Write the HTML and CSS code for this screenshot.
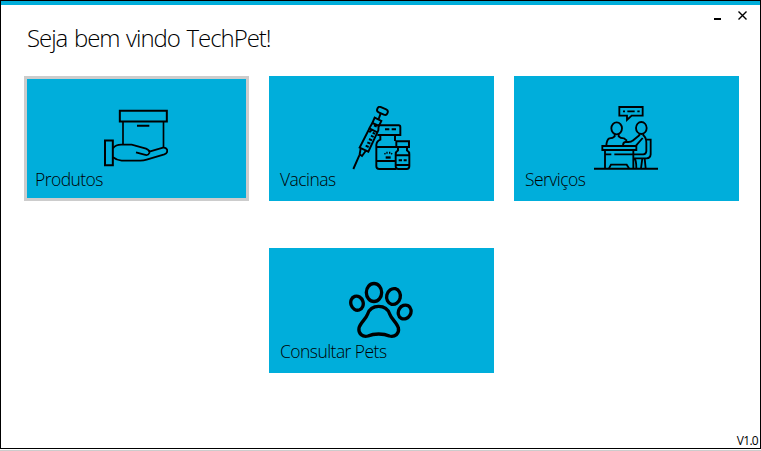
FILE: index.html
```html
<!DOCTYPE html>
<html lang="pt-BR">
<head>
<meta charset="utf-8">
<title>TechPet</title>
<link rel="stylesheet" href="styles.css">
</head>
<body>
<div class="window">
  <header class="header">
    <h1 class="title">Seja bem vindo TechPet!</h1>
    <div class="controls">
      <svg class="minimize" viewBox="0 0 7 2"><path d="M0 0h7v2H0z"/></svg>
      <svg class="close" viewBox="0 0 9 9"><path d="M.5.5l8 8M8.500.5l-8 8"/></svg>
    </div>
  </header>
  <main class="tiles">
    <a class="tile selected">
      <svg class="icon" viewBox="42 33 192 192">
        <path d="M89.500 47.500H230.500V79.500H89.500z" stroke-width="6"/>
        <path d="M99 80V148M220.500 80V158" stroke-width="5"/>
        <path d="M141 92H178M45 136.500H68.500V210.500H45z" stroke-width="6"/>
        <path d="M69 160Q77 149 94 149H125L168 161Q180 166 178 174Q174 183 163 179L138 172M178 170L219 158Q230 157 232 167Q232 175 223 178L170 194Q161 197 151 197H95Q80 196 69 187" stroke-width="5.500"/>
      </svg>
      <span class="label">Produtos</span>
    </a>
    <a class="tile">
      <svg class="icon" viewBox="27 33 192 192">
        <g stroke-width="5.800">
          <rect x="111" y="39" width="33" height="17" rx="8" transform="rotate(24 127 47)"/>
          <path d="M122 55L116 72M104 68L124 78L117 93L97 84zM97 84L88 100L112 112M116 92L115 106L85 170L59 158L89 99M102 91L110 95M97 103L88 112M98 113L105 117M93 122L101 126M87 132L96 136M82 142L91 146M77 152L86 156M62 160L59 178L66 183L77 168M58 181L40 222"/>
          <path d="M114 91H176Q181 91 181 96V120H112M135 103H148M155 103H168M121 122V134Q110 138 109 150V214Q109 222 118 222H168M165 122V138M109 156H167M109 198H167M169 139H207V156H169zM174 156V166Q167 170 167 178V214Q167 222 175 222H200Q208 222 208 214V178Q208 170 201 166V156M169 181H207M169 210H207M176 196H186M191 196H200"/>
        </g>
        <path d="M137 184H152V191H137z" fill="#000" stroke="none"/>
        <path d="M134 174L136 178M141 170V176M149 170V176M156 174L154 178" stroke-width="4"/>
      </svg>
      <span class="label">Vacinas</span>
    </a>
    <a class="tile">
      <svg class="icon" viewBox="42 33 192 192">
        <g stroke-width="5.500">
          <path d="M118 36H188V62H155L141 75V62H118zM129 49H135M142 49H164M172 49H179"/>
          <ellipse cx="110" cy="100" rx="16" ry="18"/>
          <ellipse cx="184" cy="99" rx="16" ry="18"/>
          <path d="M104 117V124Q99 130 88 130Q80 134 79 152M116 117V124Q121 130 132 130L141 137M178 117V121L158 137Q154 141 145 141H136Q129 142 129 152M190 117V121Q199 128 199 143V169Q198 177 190 178H162M188 129L168 152"/>
          <path d="M67 153H169V165H67zM75 166V220M160 166V220M75 178H94M103 178H159M87 220L93 209H140L147 220M199 134H212V178Q211 189 200 190H163M187 190L183 220M194 190L197 220M163 189Q169 195 169 220"/>
        </g>
        <path d="M42 221.500H234" stroke-width="6"/>
      </svg>
      <span class="label">Serviços</span>
    </a>
    <a class="tile second-row">
      <svg class="icon" viewBox="42 24 192 192">
        <g stroke-width="10">
          <ellipse cx="66" cy="99.500" rx="18.500" ry="21.500" transform="rotate(-18 66 99.500)"/>
          <ellipse cx="117" cy="67.500" rx="23" ry="27"/>
          <ellipse cx="175.500" cy="79.500" rx="20.500" ry="24" transform="rotate(14 175.500 79.500)"/>
          <ellipse cx="209" cy="126" rx="18.500" ry="21.500" transform="rotate(30 209 126)"/>
          <path d="M131 109C113 109 102 120 98 132C93 147 75 159 72 174C69 191 83 202 99 198C116 190 146 190 163 198C180 202 194 191 190 174C187 159 169 147 164 132C160 120 149 109 131 109z"/>
        </g>
      </svg>
      <span class="label">Consultar Pets</span>
    </a>
  </main>
  <footer class="version">V1.0</footer>
</div>
</body>
</html>
```
FILE: styles.css
```css
* {
  box-sizing: border-box;
}

body {
  margin: 0;
  height: 451px;
  background: #fff;
  border-bottom: 1px solid #ccc;
  font-family: "Open Sans", "Noto Sans", sans-serif;
  color: #000;
}

.window {
  height: 449px;
  border: 1px solid #000;
  display: flex;
  flex-direction: column;
}

.header {
  height: 75px;
  border-top: 4px solid #00aedb;
  display: flex;
  justify-content: space-between;
  padding: 0 13px 0 26px;
}

.title {
  margin: 16px 0 0;
  font-size: 24px;
  line-height: 33px;
  font-weight: 300;
  letter-spacing: -1.05px;
  word-spacing: 1.5px;
}

.controls {
  display: flex;
  gap: 17px;
  padding-top: 6px;
}

.minimize {
  width: 7px;
  height: 2px;
  margin-top: 7px;
}

.close {
  width: 9px;
  height: 9px;
  fill: none;
  stroke: #000;
  stroke-width: 1.4;
}

.tiles {
  display: grid;
  grid-template-columns: repeat(3, 225px);
  grid-auto-rows: 125px;
  gap: 47px 20px;
  padding-left: 23px;
}

.tile {
  display: grid;
  background: #00aedb;
}

.selected {
  box-shadow: inset 0 0 0 3px #ccc;
}

.second-row {
  grid-column: 2;
}

.icon,
.label {
  grid-area: 1 / 1;
}

.icon {
  width: 64px;
  height: 64px;
  margin: 30px 0 0 80px;
  fill: none;
  stroke: #000;
}

.label {
  align-self: end;
  padding: 0 0 10px 11px;
  font-size: 17.5px;
  line-height: 24px;
  font-weight: 300;
  letter-spacing: -0.55px;
}

.version {
  margin-top: auto;
  padding-right: 2px;
  text-align: right;
  font-size: 12px;
  line-height: 14px;
  letter-spacing: -0.7px;
}
```
